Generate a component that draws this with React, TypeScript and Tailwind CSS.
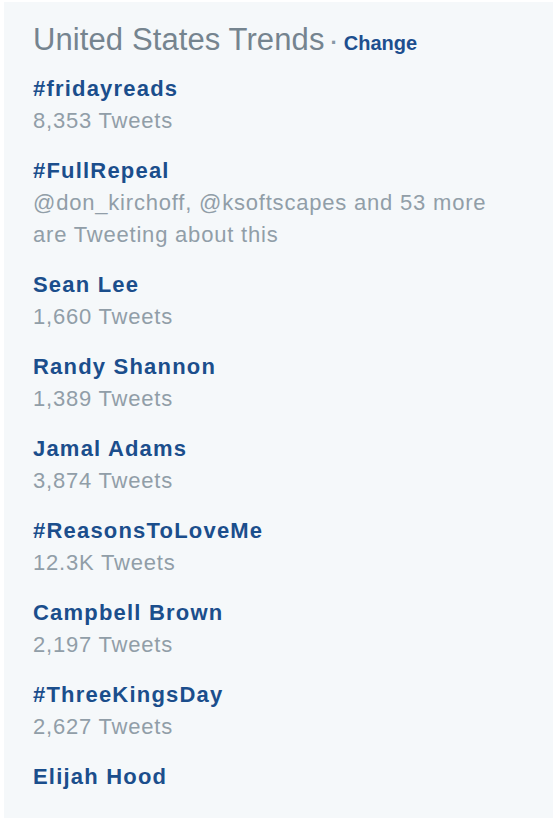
import React from "react";

type Trend = {
  name: string;
  meta: string;
};

const trends: Trend[] = [
  { name: "#fridayreads", meta: "8,353 Tweets" },
  { name: "#FullRepeal", meta: "@don_kirchoff, @ksoftscapes and 53 more are Tweeting about this" },
  { name: "Sean Lee", meta: "1,660 Tweets" },
  { name: "Randy Shannon", meta: "1,389 Tweets" },
  { name: "Jamal Adams", meta: "3,874 Tweets" },
  { name: "#ReasonsToLoveMe", meta: "12.3K Tweets" },
  { name: "Campbell Brown", meta: "2,197 Tweets" },
  { name: "#ThreeKingsDay", meta: "2,627 Tweets" },
  { name: "Elijah Hood", meta: "" },
];

export default function App() {
  return (
    <div className="w-[553px] h-[824px] bg-white pt-[2px] pl-[4px] pb-[6px] font-['Liberation_Sans',Arial,sans-serif]">
      <div className="h-full bg-[#f5f8fa] pt-[18px] pl-[29px] pr-[29px]">
        {/* header */}
        <div className="flex items-baseline h-[40px] leading-[40px] mb-[13px]">
          <h2 className="text-[31px] tracking-[0.1px] text-[#75848f]">United States Trends</h2>
          <span className="text-[22px] font-bold text-[#8899a6] mx-[6px]">·</span>
          <a className="text-[20px] font-bold text-[#1d4f8f]">Change</a>
        </div>

        <ul className="flex flex-col gap-[18px]">
          {trends.map((t) => (
            <li key={t.name} className="text-[22px] leading-[32px]">
              <div className="font-bold tracking-[1.2px] text-[#1b4e8c]">{t.name}</div>
              {t.meta && (
                <div className="max-w-[475px] tracking-[0.8px] text-[#919ea8]">{t.meta}</div>
              )}
            </li>
          ))}
        </ul>
      </div>
    </div>
  );
}
